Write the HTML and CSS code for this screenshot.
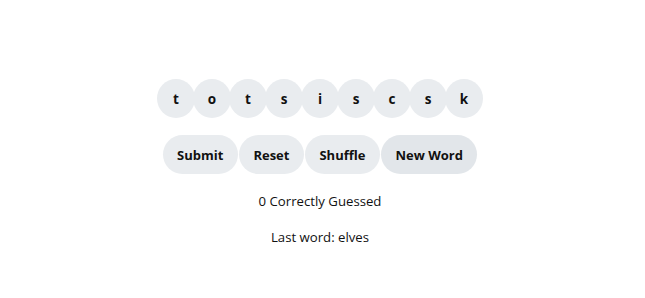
FILE: index.html
```html
<!DOCTYPE html>
<html lang="en">
<head>
  <meta charset="UTF-8" />
  <meta name="viewport" content="width=device-width, initial-scale=1" />
  <title>Word Game</title>
  <link rel="stylesheet" href="styles.css">
</head>
<body>
  <div class="game">
    <div class="letters">
      <button class="letter">t</button>
      <button class="letter">o</button>
      <button class="letter">t</button>
      <button class="letter">s</button>
      <button class="letter">i</button>
      <button class="letter">s</button>
      <button class="letter">c</button>
      <button class="letter">s</button>
      <button class="letter">k</button>
    </div>
    <div class="controls">
      <button class="btn">Submit</button>
      <button class="btn">Reset</button>
      <button class="btn">Shuffle</button>
      <button class="btn btn-new">New Word</button>
    </div>
    <p class="score">0 Correctly Guessed</p>
    <p class="last">Last word: elves</p>
  </div>
</body>
</html>
```

FILE: styles.css
```css
body {
  font-family: "Open Sans", "Noto Sans", sans-serif;
  margin: 0;
  background: #fff;
  color: #111;
}
.game {
  display: flex;
  flex-direction: column;
  align-items: center;
  padding-top: 79px;
  padding-right: 5px;
}
.letters {
  display: flex;
}
.letter {
  width: 38px;
  height: 39px;
  margin: 0 -1px;
  border: none;
  border-radius: 50%;
  background: #e9ecef;
  font-family: inherit;
  font-weight: bold;
  font-size: 13.5px;
  color: #111;
  padding: 0;
}
.controls {
  display: flex;
  gap: 1px;
  margin-top: 17px;
}
.btn {
  height: 39px;
  padding: 0 14.5px;
  border: none;
  border-radius: 20px;
  background: #e9ecef;
  font-family: inherit;
  font-weight: bold;
  font-size: 13px;
  color: #111;
}
.btn-new {
  background: #e2e6ea;
}
.score, .last {
  font-size: 13.2px;
  margin: 0;
}
.score {
  margin-top: 18px;
}
.last {
  margin-top: 18px;
}
```
